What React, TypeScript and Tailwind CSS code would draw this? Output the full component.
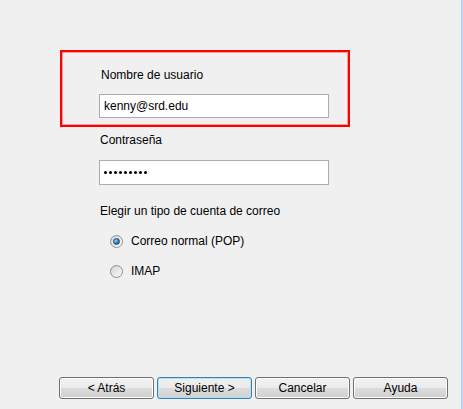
function Radio({ checked }: { checked?: boolean }) {
  return (
    <span className="relative flex h-[13px] w-[13px] items-center justify-center rounded-full border border-[#8e8f8f] bg-gradient-to-br from-[#d4d4d4] to-[#fbfbfb]">
      {checked && (
        <span className="h-[7px] w-[7px] rounded-full border border-[#1f4d7a] bg-[radial-gradient(circle_at_35%_35%,#9cd2f5,#2a6fae_60%,#1d4f80)]" />
      )}
    </span>
  );
}

function WinButton({ label, primary }: { label: string; primary?: boolean }) {
  return (
    <button
      className={
        "h-[22px] w-[95px] rounded-[3px] border text-[12px] leading-none text-black " +
        (primary
          ? "border-[#3c7fb1] bg-[linear-gradient(#f0f0f0_0%,#ebebeb_50%,#dcdcdc_50%,#d2d2d2_100%)] shadow-[inset_0_0_0_1px_#a8e3fb]"
          : "border-[#707070] bg-[linear-gradient(#f2f2f2_0%,#ebebeb_50%,#dddddd_50%,#cfcfcf_100%)] shadow-[inset_0_0_0_1px_#fcfcfc]")
      }
    >
      {label}
    </button>
  );
}

export default function App() {
  return (
    <div
      className="relative flex h-[409px] w-[463px] bg-[#f0f0f0] text-[12px] text-black"
      style={{ fontFamily: '"Liberation Sans", Arial, sans-serif' }}
    >
      <div className="flex flex-1 flex-col">
        <div className="flex flex-col pl-[99px] pt-[67px]">
          <div className="h-[16px] pl-[2px] leading-[16px]">Nombre de usuario</div>
          <div className="mt-[11px] flex h-[24px] w-[230px] items-center border border-[#abadb3] bg-white pl-[4px]">
            kenny@srd.edu
          </div>
          <div className="mt-[14px] h-[16px] pl-[1px] leading-[16px]">Contraseña</div>
          <div className="mt-[12px] flex h-[25px] w-[230px] items-center gap-[2px] border border-[#abadb3] bg-white pl-[4px]">
            {Array.from({ length: 9 }).map((_, i) => (
              <span key={i} className="h-[3px] w-[3px] rounded-full bg-black" />
            ))}
          </div>
          <div className="mt-[18px] h-[16px] pl-[1px] leading-[16px]">
            Elegir un tipo de cuenta de correo
          </div>
          <div className="mt-[14px] flex h-[16px] items-center gap-[8px] pl-[11px]">
            <Radio checked />
            <span>Correo normal (POP)</span>
          </div>
          <div className="mt-[14px] flex h-[16px] items-center gap-[8px] pl-[11px]">
            <Radio />
            <span>IMAP</span>
          </div>
        </div>
        <div className="mt-auto mb-[10px] flex gap-[3px] pl-[59px]">
          <WinButton label="< Atrás" />
          <WinButton label="Siguiente >" primary />
          <WinButton label="Cancelar" />
          <WinButton label="Ayuda" />
        </div>
      </div>
      <div className="w-[2px] bg-[#bdd3ec]" />

      <div className="pointer-events-none absolute left-[60px] top-[50px] h-[77px] w-[290px] border-2 border-[#ff0000] shadow-[inset_0_0_0_1px_#ff9a9a]" />
    </div>
  );
}
